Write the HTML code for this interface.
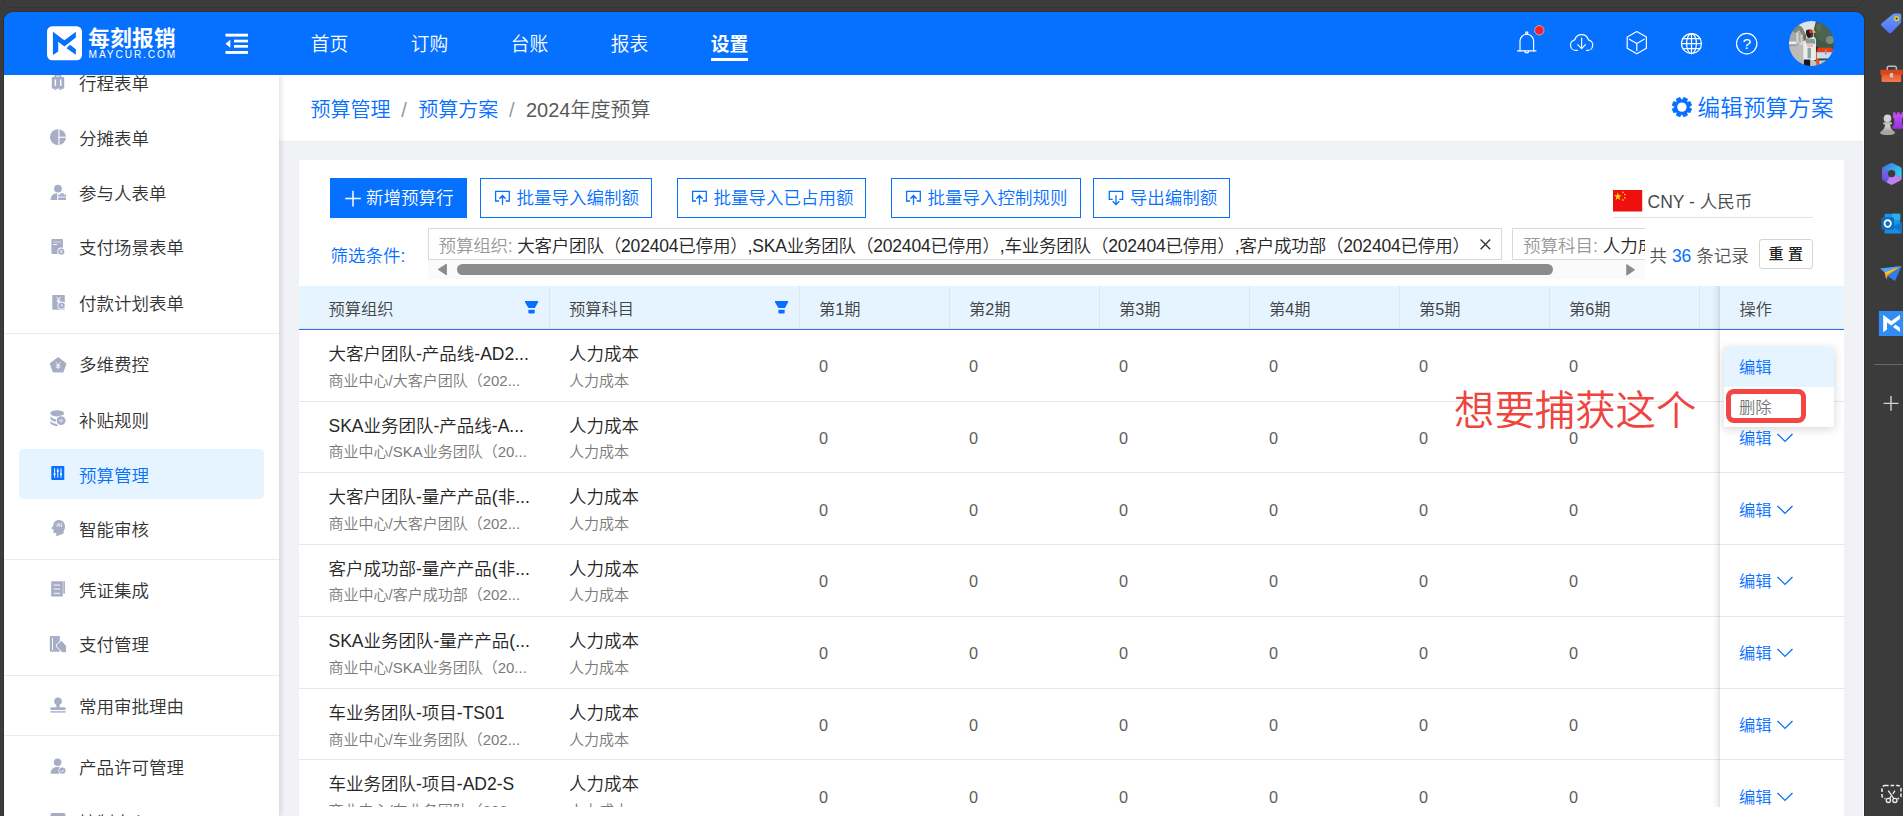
<!DOCTYPE html>
<html lang="zh-CN">
<head>
<meta charset="utf-8">
<title>每刻报销 - 预算管理</title>
<style>
*{box-sizing:border-box;margin:0;padding:0}
html,body{width:1903px;height:816px;overflow:hidden;background:#3b3b3b}
body{font-family:"Liberation Sans","Noto Sans CJK SC",sans-serif;color:#333;position:relative;font-weight:350}
.abs{position:absolute}
.t{position:absolute;white-space:nowrap}
svg{position:absolute;overflow:visible}
/* browser chrome bits */
#tabstrip{position:absolute;left:3px;top:-20px;width:1860px;height:28px;border:1px solid #343434;border-radius:9px;background:#3c3c3c}
#page{position:absolute;left:4px;top:12px;width:1860px;height:804px;background:#0670ff;border-radius:9px 9px 0 0;overflow:hidden;box-shadow:0 0 0 1px #313131}
#pg{position:absolute;left:-4px;top:-12px;width:1903px;height:816px}
#edge{position:absolute;left:1864px;top:0;width:39px;height:816px;overflow:hidden}
#eg{position:absolute;left:-1864px;top:0;width:1903px;height:816px}
/* header */
#hdr{position:absolute;left:0;top:0;width:1903px;height:75px;background:#0670ff;z-index:20}
.nav{position:absolute;top:29px;height:32px;line-height:32px;font-size:18.75px;color:#fff;white-space:nowrap}
/* sidebar */
#side{position:absolute;left:0;top:74px;width:279px;height:742px;background:#fff;z-index:10;box-shadow:1px 0 6px rgba(0,21,41,.16)}
.mi{position:absolute;left:79px;font-size:17.5px;line-height:26px;height:26px;color:#333;white-space:nowrap;z-index:11}
.mic{z-index:11}
.dv{position:absolute;left:4px;width:275px;height:1px;background:#ebebeb;z-index:11}
/* main */
#crumb{position:absolute;left:279px;top:74px;width:1584px;height:67.6px;background:#fff;border-bottom:1px solid #ebedf0}
.bc{position:absolute;top:95px;height:30px;line-height:30px;font-size:20px;white-space:nowrap}
#card{position:absolute;left:299px;top:160px;width:1545px;height:660px;background:#fff}
.btn{position:absolute;top:178px;height:40px;border:1px solid #0670ff;background:#fff}
.btn.pri{background:#0670ff}
.bt{position:absolute;top:185px;height:26px;line-height:26px;font-size:17.5px;color:#0670ff;white-space:nowrap}
.th{position:absolute;top:296px;height:26px;line-height:26px;font-size:16.25px;color:#444;white-space:nowrap}
.vs{position:absolute;top:286px;width:1px;height:42px;background:#e2e4e8}
.c1{position:absolute;font-size:17.5px;line-height:26px;height:26px;color:#262626;white-space:nowrap}
.c2{position:absolute;font-size:15px;line-height:22px;height:22px;color:#7a7a7a;white-space:nowrap}
.n{position:absolute;font-size:16.25px;line-height:24px;height:24px;color:#5c5c5c;white-space:nowrap}
.rl{position:absolute;left:299px;width:1545px;height:1px;background:#e8e8e8}
.ed{position:absolute;left:1739px;font-size:16.25px;line-height:24px;height:24px;color:#0670ff;white-space:nowrap;z-index:6}
#bg{position:absolute;left:0;top:70px;width:1903px;height:750px;background:#f0f2f5}
</style>
</head>
<body>
<div id="tabstrip"></div>
<div id="page"><div id="pg"><div id="bg"></div>
<div id="hdr">
<svg style="left:44px;top:23px" width="42" height="40" viewBox="0 0 857 816"><rect x="62" y="65" width="713" height="695" rx="105" fill="#fff"/><path d="M182 180 L415 350 L650 180 L650 295 L415 480 L290 385 L290 580 L182 655 Z" fill="#0670ff"/><path d="M530 445 L650 535 L650 650 L460 515 Z" fill="#0670ff"/></svg>
<div class="t" style="left:88.2px;top:23.8px;font-size:21.6px;line-height:30px;font-weight:700;color:#fff;letter-spacing:0.35px">每刻报销</div>
<div class="t" style="left:88.6px;top:48.9px;font-size:10.2px;line-height:12px;color:#fff;letter-spacing:1.85px;font-weight:400">MAYCUR.COM</div>
<svg style="left:0;top:0" width="1903" height="75" viewBox="0 0 1903 75">
<g fill="#fff"><rect x="225.5" y="33.7" width="22.5" height="2.9"/><rect x="234" y="39.7" width="14" height="2.7"/><rect x="234" y="45" width="14" height="2.7"/><rect x="225.5" y="51" width="22.5" height="2.9"/><path d="M225.5 43.7 L230.3 39.7 L230.3 47.8 Z"/></g>
<g fill="none" stroke="#fff" stroke-width="1.2" stroke-linecap="round" stroke-linejoin="round">
<path d="M1517.6 50.9 H1536"/><path d="M1520 50.9 V41 a6.8 6.8 0 0 1 13.6 0 V50.9"/><circle cx="1526.8" cy="33" r="1.1"/><path d="M1524.9 51.2 a1.9 1.6 0 0 0 3.8 0"/>
<path d="M1577.4 50.4 H1576 a5.3 5.3 0 0 1 -1.2 -10.5 a7 7 0 0 1 13.6 0 a5.3 5.3 0 0 1 -1.2 10.5 H1586.6"/><path d="M1581.6 38.2 V48.4 M1577.7 44.7 L1581.6 48.6 L1585.5 44.7"/>
<path d="M1636.8 31.5 L1646.4 37 L1646.4 48.2 L1636.8 53.7 L1627.2 48.2 L1627.2 37 Z"/><path d="M1636.8 43.5 L1629.4 39.2 M1636.8 43.5 L1644.2 39.2 M1636.8 43.5 V50.6"/>
<circle cx="1691.5" cy="43.6" r="10"/><ellipse cx="1691.5" cy="43.6" rx="4.9" ry="10"/><path d="M1691.5 33.6 V53.6 M1681.5 43.6 H1701.5 M1682.9 38.6 H1700.1 M1682.9 48.6 H1700.1"/>
<circle cx="1746.7" cy="43.6" r="10.2"/>
</g>
<circle cx="1539.3" cy="30.3" r="4.7" fill="#f5222d" stroke="#ffd9d9" stroke-width="0.6"/>
<text x="1746.7" y="49.2" text-anchor="middle" font-size="15.5" fill="#fff" font-family="Liberation Sans, sans-serif">?</text>
<defs><clipPath id="av"><circle cx="1811.45" cy="43.45" r="22.5"/></clipPath><filter id="bl" x="-5%" y="-5%" width="110%" height="110%"><feGaussianBlur stdDeviation="0.45"/></filter></defs>
<g clip-path="url(#av)"><g transform="translate(1788.95 20.95)" filter="url(#bl)">
<rect x="-2" y="-2" width="49" height="49" fill="#dde4e8"/>
<path d="M-2 12 L6 8 L12 12 L16 20 L16 26 L-2 27 Z" fill="#a7aaa2"/>
<path d="M3 9 L9 3.5 L13 6 L17.5 14 L15.5 17 L10 9.5 L6 12 Z" fill="#80857c"/>
<path d="M7 12 L9.5 11 L10 22 L7.5 22 Z M11.5 14 L13 14 L13.5 22 L12 22 Z" fill="#cdd3d4"/>
<path d="M-2 25 L16 23.5 L22 24 L29 47 L-2 47 Z" fill="#bdbcb8"/>
<rect x="-1" y="20.5" width="8.5" height="4" rx="1.2" fill="#ececec"/><rect x="10" y="21.5" width="4.5" height="2.4" rx="1" fill="#dcdcdc"/><rect x="-1" y="23.6" width="8.5" height="1" fill="#6b6b6b"/>
<path d="M27 0 L47 0 L47 30 L26 29 L24.5 20 L25 8 Z" fill="#42584a"/><ellipse cx="36" cy="12" rx="9" ry="9" fill="#4c6350"/><ellipse cx="41" cy="19" rx="4" ry="4" fill="#7d8c7c"/><ellipse cx="30" cy="6" rx="3" ry="4" fill="#566c57"/>
<path d="M21 38 L28 38 L30 47 L21 47 Z" fill="#c9c5be"/>
<path d="M25 25 L29 26 L29.5 41 L25.5 40 Z" fill="#2b2f33"/><path d="M26.5 31 L29 30 L31 45 L27.5 45 Z" fill="#e5551f"/><path d="M31 38 L39 37.5 L37 43 L32 44 Z" fill="#a9c6c8"/><path d="M29 37 L42 36.6 L41 39 L30 39.6 Z" fill="#3a3f42"/>
<rect x="28.4" y="26.8" width="15.2" height="5.4" rx="1.4" fill="#ee3d16"/><rect x="28" y="31.4" width="15.2" height="6.2" rx="0.8" fill="#c6deef"/><rect x="36" y="28.8" width="1.6" height="4.8" fill="#9c9b8d"/>
<path d="M14.2 18 Q14.5 15.5 18 15.5 L25 16 Q27.6 17 27 22 L27 39 L14.5 39.5 Z" fill="#e9eded"/>
<path d="M14.2 15 L17 14 L17.6 19 L14.6 20 Z" fill="#8c5c3c"/>
<path d="M16.6 17 L25.5 18 Q27 20 26 23 L18 23.5 Q16 21 16.6 17 Z" fill="#81a098"/><path d="M17.6 22.4 L24.6 22 L24 26 L18.6 26.6 Z" fill="#e9bcc0"/><rect x="18.6" y="27" width="3.4" height="10.4" fill="#88a5a0"/>
<path d="M17 10.5 Q17 8.6 19.5 8.6 L23 8.8 Q24.6 9.5 24.4 12 L23.6 16.4 L19 17 Q16.8 15 17 10.5 Z" fill="#1f1b1f"/><path d="M20 9.6 L24 9 L25 12 L20.6 12.4 Z" fill="#ee2a4c"/><path d="M23.4 9 L25.6 9.6 L26.8 11.6 L24.4 12.2 Z" fill="#f5c62c"/><path d="M21.4 12.6 L24 12.4 L23.6 15.6 L21.8 15.8 Z" fill="#5a3a30"/>
<rect x="15" y="38.6" width="6.2" height="8" fill="#15151c"/>
</g></g>
</svg>
<div class="nav" style="left:310.7px">首页</div>
<div class="nav" style="left:410.7px">订购</div>
<div class="nav" style="left:510.7px">台账</div>
<div class="nav" style="left:610.7px">报表</div>
<div class="nav" style="left:710.7px;font-weight:700">设置</div>
<div class="abs" style="left:711px;top:58px;width:36.5px;height:2.6px;background:#fff"></div>
</div>
<div id="side"></div>
<div class="abs" style="left:19px;top:449px;width:245px;height:49.5px;background:#e6f4ff;border-radius:5px;z-index:11"></div>
<div class="mi" style="top:70.8px">行程表单</div>
<div class="mi" style="top:125.8px">分摊表单</div>
<div class="mi" style="top:180.8px">参与人表单</div>
<div class="mi" style="top:234.8px">支付场景表单</div>
<div class="mi" style="top:290.8px">付款计划表单</div>
<div class="mi" style="top:351.8px">多维费控</div>
<div class="mi" style="top:407.8px">补贴规则</div>
<div class="mi" style="top:462.8px;color:#0670ff">预算管理</div>
<div class="mi" style="top:516.8px">智能审核</div>
<div class="mi" style="top:577.8px">凭证集成</div>
<div class="mi" style="top:631.8px">支付管理</div>
<div class="mi" style="top:693.8px">常用审批理由</div>
<div class="mi" style="top:754.8px">产品许可管理</div>
<div class="mi" style="top:809.8px">控制中心</div>
<div class="dv" style="top:333px"></div>
<div class="dv" style="top:559px"></div>
<div class="dv" style="top:675px"></div>
<div class="dv" style="top:735px"></div>
<svg class="mic" style="left:0;top:74px" width="279" height="742" viewBox="0 74 279 742">
<rect x="54.4" y="74.9" width="6.8" height="2.6" rx="0.5" fill="#a6adc5"/><rect x="56" y="75.7" width="3.6" height="1.2" fill="#dfe3ee"/><rect x="51.8" y="76.9" width="12.4" height="11.8" rx="0.9" fill="#a6adc5"/><rect x="54.7" y="79.5" width="1.4" height="6.5" fill="#fff"/><rect x="60" y="79.5" width="1.4" height="6.5" fill="#fff"/><rect x="54.4" y="88.6" width="1.9" height="1.4" fill="#a6adc5"/><rect x="59.6" y="88.6" width="1.9" height="1.4" fill="#a6adc5"/>
<circle cx="58" cy="137.2" r="8" fill="#a6adc5"/><rect x="58.4" y="129" width="1.1" height="16.5" fill="#fff"/><rect x="58.4" y="136.7" width="8" height="1.1" fill="#fff"/>
<circle cx="58" cy="188.6" r="3.9" fill="#a6adc5"/><path d="M50.6 200 C50.6 195.6 53.6 193.3 57.2 193.3 L57.2 200 Z" fill="#a6adc5"/><rect x="58.2" y="194.6" width="7.8" height="5.4" fill="#a6adc5"/><rect x="60.4" y="193.2" width="3.4" height="1.6" fill="#a6adc5"/><rect x="58.2" y="196.6" width="7.8" height="0.9" fill="#fff"/>
<rect x="51.4" y="239" width="11.5" height="14.9" rx="0.8" fill="#a6adc5"/><rect x="53.2" y="241.3" width="7.8" height="1.5" fill="#c6ccdc"/><rect x="53.2" y="244" width="4" height="1" fill="#f4f5f9"/><circle cx="61.3" cy="251.5" r="4" fill="#fff"/><circle cx="61.3" cy="251.5" r="3.1" fill="#a6adc5"/><path d="M60.1 249.9 L61.3 251.4 L62.5 249.9 M61.3 251.4 V253.4 M60.2 251.9 H62.4" stroke="#fff" stroke-width="0.65" fill="none"/>
<rect x="52.3" y="295" width="12.5" height="14.7" rx="0.8" fill="#a6adc5"/><path d="M56.5 296.9 L58.5 299.4 L60.5 296.9 M58.5 299.4 V302.8 M56.7 300 H60.3 M56.7 301.4 H60.3" stroke="#fff" stroke-width="0.9" fill="none"/><circle cx="61.5" cy="305.6" r="4.1" fill="#fff"/><circle cx="61.5" cy="305.6" r="3.2" fill="#a6adc5"/><path d="M61.3 303.8 V305.9 H63" stroke="#fff" stroke-width="0.8" fill="none"/>
<path d="M58.1 357.6 L66 363.5 L63 372 L53.2 372 L50.2 363.5 Z" fill="#a6adc5" stroke="#a6adc5" stroke-width="1" stroke-linejoin="round"/><path d="M56 362.3 L58.1 365 L60.2 362.3 M58.1 365 V369 M55.8 365.6 H60.4 M55.8 367.3 H60.4" stroke="#fff" stroke-width="0.85" fill="none"/>
<ellipse cx="57.2" cy="413.3" rx="6.8" ry="3.1" fill="#a6adc5"/><path d="M50.4 416.6 Q53 419.4 58 419.6 L58 422 Q52.6 421.6 50.4 418.9 Z" fill="#a6adc5"/><path d="M50.4 421 Q52.6 423.8 57 424.2 L58.4 426 Q52.4 426 50.4 423.2 Z" fill="#a6adc5"/><circle cx="61.1" cy="420.7" r="5.3" fill="#fff"/><circle cx="61.1" cy="420.7" r="4.4" fill="#a6adc5"/><path d="M58.9 420.7 H63.3 M61.1 418.5 V422.9" stroke="#e9ebf2" stroke-width="0.8"/>
<rect x="51.3" y="466" width="13" height="14" rx="0.8" fill="#0670ff"/><path d="M54.6 468.3 V477.7 M57.8 468.3 V477.7 M61 468.3 V477.7" stroke="#fff" stroke-width="1"/><path d="M53.6 474.3 H55.6 M56.8 471 H58.8 M60 474.3 H62" stroke="#fff" stroke-width="1.6"/>
<path d="M58.8 519.9 C62.6 519.9 65 522.8 65 526.4 C65 529 63.9 530.6 63.5 532 L63.5 533.6 L57.2 536 L56.3 536 L56.3 532.9 L53.5 532.9 L53.5 529.4 L51.3 528.5 L53.3 525.4 C53.5 522.2 55.8 519.9 58.8 519.9 Z" fill="#a6adc5"/><text x="59.2" y="527.3" font-size="5.8" font-weight="700" fill="#f3f4f8" text-anchor="middle" font-family="Liberation Sans, sans-serif">AI</text>
<rect x="51.2" y="581.2" width="11.6" height="15.4" rx="0.6" fill="#a6adc5"/><rect x="63.3" y="581.2" width="1.6" height="12.4" fill="#a6adc5"/><path d="M53.6 585.1 H60.2 M53.6 589 H60.2 M53.6 593.3 H60.2" stroke="#fff" stroke-width="0.95"/>
<rect x="49.8" y="636.1" width="10" height="15.6" fill="#a6adc5"/><rect x="52" y="638" width="0.9" height="12" fill="#fff"/><path d="M61.6 640.4 L66.6 645.9 L66.6 652.7 L62.3 652.7 L56.4 646.6 Q56 644.6 58.2 643 Z" fill="#a6adc5" stroke="#fff" stroke-width="1" stroke-linejoin="round"/>
<circle cx="58" cy="701.2" r="3.8" fill="#a6adc5"/><rect x="56.3" y="703" width="3.4" height="5" fill="#a6adc5"/><path d="M50.4 710 V708.6 Q50.4 707.3 52 707.3 H64 Q65.6 707.3 65.6 708.6 V710 Z" fill="#a6adc5"/><rect x="50.4" y="711.2" width="15.2" height="1.4" fill="#a6adc5"/>
<circle cx="57.6" cy="762.3" r="3.8" fill="#a6adc5"/><path d="M50.5 773.7 C50.5 769.4 53.4 766.9 57.4 766.9 C59.4 766.9 60.8 767.5 61.8 768.5 L61.8 773.7 Z" fill="#a6adc5"/><circle cx="62.4" cy="770.6" r="3.9" fill="#fff"/><circle cx="62.4" cy="770.6" r="3.2" fill="#a6adc5"/><path d="M60.9 770.7 L62 771.8 L64 769.6" stroke="#fff" stroke-width="0.8" fill="none"/>
<rect x="50.5" y="813" width="15" height="12" rx="2" fill="#a6adc5"/>
</svg>
<div id="crumb"></div>
<div class="abs" style="left:1863px;top:75px;width:1.2px;height:745px;background:#fdfdfd"></div>
<div class="bc" style="left:310.5px;color:#0670ff">预算管理</div>
<div class="bc" style="left:401.3px;color:#999">/</div>
<div class="bc" style="left:418.3px;color:#0670ff">预算方案</div>
<div class="bc" style="left:509px;color:#999">/</div>
<div class="bc" style="left:526px;color:#595959">2024年度预算</div>
<svg style="left:0;top:0;z-index:2" width="1903" height="160" viewBox="0 0 1903 160"><path d="M1682.52 99.63 L1683.80 97.38 L1687.43 98.89 L1686.75 101.38 L1687.62 102.25 L1690.11 101.57 L1691.62 105.20 L1689.37 106.48 L1689.37 107.72 L1691.62 109.00 L1690.11 112.63 L1687.62 111.95 L1686.75 112.82 L1687.43 115.31 L1683.80 116.82 L1682.52 114.57 L1681.28 114.57 L1680.00 116.82 L1676.37 115.31 L1677.05 112.82 L1676.18 111.95 L1673.69 112.63 L1672.18 109.00 L1674.43 107.72 L1674.43 106.48 L1672.18 105.20 L1673.69 101.57 L1676.18 102.25 L1677.05 101.38 L1676.37 98.89 L1680.00 97.38 L1681.28 99.63 Z" fill="#0670ff" stroke="#0670ff" stroke-width="0.8" stroke-linejoin="round"/><circle cx="1681.9" cy="107.1" r="4.7" fill="#fff"/></svg>
<div class="t" style="left:1697.5px;top:93px;height:32px;line-height:32px;font-size:22.5px;letter-spacing:0.2px;color:#0670ff">编辑预算方案</div>
<div id="card"></div>
<div class="btn pri" style="left:330px;width:137px;box-shadow:0 2px 0 rgba(0,0,0,.03)"></div>
<div class="bt" style="left:366px;color:#fff">新增预算行</div>
<svg style="left:0;top:160px;z-index:3" width="1903" height="130" viewBox="0 160 1903 130">
<path d="M345.2 198.6 H360.8 M353 190.8 V206.4" stroke="#fff" stroke-width="1.5" fill="none"/>
<path d="M499.1 201 H495.6 V191.4 H509.3 V201 H505.70000000000005 M502.5 204.7 V195.6 M499.3 198.8 L502.5 195.5 L505.70000000000005 198.8" stroke="#0670ff" stroke-width="1.3" fill="none" stroke-linejoin="miter"/>
<path d="M696.1 201 H692.6 V191.4 H706.3000000000001 V201 H702.7 M699.5 204.7 V195.6 M696.3000000000001 198.8 L699.5 195.5 L702.7 198.8" stroke="#0670ff" stroke-width="1.3" fill="none" stroke-linejoin="miter"/>
<path d="M910.1 201 H906.6 V191.4 H920.3000000000001 V201 H916.7 M913.5 204.7 V195.6 M910.3000000000001 198.8 L913.5 195.5 L916.7 198.8" stroke="#0670ff" stroke-width="1.3" fill="none" stroke-linejoin="miter"/>
<path d="M1112.7 199.4 H1109.3 V191.4 H1122.6 V199.4 H1119.3 M1116.0 195.2 V204.3 M1112.7 201.2 L1116.0 204.6 L1119.3 201.2" stroke="#0670ff" stroke-width="1.3" fill="none"/>
</svg>
<div class="btn" style="left:480px;width:172px"></div>
<div class="bt" style="left:516.5px">批量导入编制额</div>
<div class="btn" style="left:677px;width:189px"></div>
<div class="bt" style="left:713.5px">批量导入已占用额</div>
<div class="btn" style="left:891px;width:190px"></div>
<div class="bt" style="left:927.6px">批量导入控制规则</div>
<div class="btn" style="left:1093px;width:137px"></div>
<div class="bt" style="left:1129.8px">导出编制额</div>
<svg style="left:1613.4px;top:189.7px" width="29.2" height="21.5" viewBox="0 0 30 20" preserveAspectRatio="none"><rect width="30" height="20" fill="#ee0f0f"/><g fill="#ffde00"><path d="M5 2 L5.9 4.8 L8.8 4.8 L6.5 6.5 L7.4 9.3 L5 7.6 L2.6 9.3 L3.5 6.5 L1.2 4.8 L4.1 4.8 Z"/><circle cx="10.2" cy="2.2" r="0.8"/><circle cx="12.2" cy="4.2" r="0.8"/><circle cx="12.2" cy="7.2" r="0.8"/><circle cx="10.2" cy="9.2" r="0.8"/></g></svg>
<div class="t" style="left:1647.5px;top:188.5px;height:26px;line-height:26px;font-size:17.5px;color:#4a4a4a">CNY - 人民币</div>
<div class="abs" style="left:1613px;top:217px;width:200px;height:1px;background:#e3e3e3"></div>
<div class="t" style="left:330.5px;top:242.6px;height:26px;line-height:26px;font-size:17.5px;color:#0670ff">筛选条件:</div>
<div class="abs" style="left:428px;top:226px;width:1217px;height:53px;overflow:hidden">
<div class="abs" style="left:0;top:2.3px;width:1074px;height:31.7px;border:1px solid #d9d9d9;background:#fff"></div>
<div class="t" style="left:10.6px;top:7px;height:26px;line-height:26px;font-size:17.5px;color:#262626;letter-spacing:-0.19px"><span style="color:#999">预算组织:</span> 大客户团队（202404已停用）,SKA业务团队（202404已停用）,车业务团队（202404已停用）,客户成功部（202404已停用）</div>
<svg style="left:1051.6px;top:13.3px" width="11" height="11" viewBox="0 0 11 11"><path d="M0.6 0.6 L10.2 10.2 M10.2 0.6 L0.6 10.2" stroke="#333" stroke-width="1.35"/></svg>
<div class="abs" style="left:1084px;top:2.3px;width:300px;height:31.7px;border:1px solid #d9d9d9;background:#fff"></div>
<div class="t" style="left:1095px;top:7px;height:26px;line-height:26px;font-size:17.5px;color:#262626"><span style="color:#999">预算科目:</span> 人力成本</div>
<div class="abs" style="left:0;top:34px;width:1217px;height:19px;background:#fafafa"></div>
<div class="abs" style="left:29px;top:37.8px;width:1095.5px;height:11px;border-radius:5.5px;background:#8b8b8b"></div>
<svg style="left:0;top:34px" width="1217" height="19" viewBox="0 0 1217 19"><path d="M10.3 9.4 L18.4 4.2 L18.4 14.8 Z" fill="#8b8b8b" stroke="#8b8b8b" stroke-width="1" stroke-linejoin="round"/><path d="M1206.5 9.8 L1198.8 4.6 L1198.8 15.2 Z" fill="#8b8b8b" stroke="#8b8b8b" stroke-width="1" stroke-linejoin="round"/></svg>
</div>
<div class="t" style="left:1649.5px;top:242.5px;height:26px;line-height:26px;font-size:17.5px;color:#555">共 <span style="color:#0670ff">36</span> 条记录</div>
<div class="abs" style="left:1759px;top:239px;width:54px;height:29.5px;border:1px solid #d4d4d4;border-radius:3px;background:#fff"></div>
<div class="t" style="left:1768.5px;top:242px;height:24px;line-height:24px;font-size:15px;color:#222;letter-spacing:4.5px;font-weight:500">重置</div>
<div class="abs" style="left:299px;top:286px;width:1545px;height:42.7px;background:#e6f4ff;border-bottom:0.9px solid #dfe8ee"></div>
<div class="abs" style="left:299px;top:328.7px;width:1545px;height:1.35px;background:#2a72e6"></div>
<div class="vs" style="left:549px"></div>
<div class="vs" style="left:799px"></div>
<div class="vs" style="left:949px"></div>
<div class="vs" style="left:1099px"></div>
<div class="vs" style="left:1249px"></div>
<div class="vs" style="left:1399px"></div>
<div class="vs" style="left:1549px"></div>
<div class="vs" style="left:1699px"></div>
<div class="th" style="left:328.5px">预算组织</div>
<div class="th" style="left:569px">预算科目</div>
<div class="th" style="left:819px">第1期</div>
<div class="th" style="left:969px">第2期</div>
<div class="th" style="left:1119px">第3期</div>
<div class="th" style="left:1269px">第4期</div>
<div class="th" style="left:1419px">第5期</div>
<div class="th" style="left:1569px">第6期</div>
<svg style="left:0;top:286px" width="1903" height="44" viewBox="0 286 1903 44"><path d="M525 301 H538.1 V302.2 L534.9 307.9 H528.4 L525 302.2 Z M528.4 309.7 H534.7 V312.6 Q534.7 313.6 533.7 313.6 H529.4 Q528.4 313.6 528.4 312.6 Z" fill="#0670ff"/><path d="M775 301 H788.1 V302.2 L784.9 307.9 H778.4 L775 302.2 Z M778.4 309.7 H784.7 V312.6 Q784.7 313.6 783.7 313.6 H779.4 Q778.4 313.6 778.4 312.6 Z" fill="#0670ff"/></svg>
<div class="abs" style="left:299px;top:330px;width:1545px;height:477px;overflow:hidden"><div class="abs" style="left:-299px;top:-330px;width:1903px;height:900px">
<div class="c1" style="left:328.5px;top:340.60px">大客户团队-产品线-AD2...</div>
<div class="c2" style="left:328.5px;top:369.50px">商业中心/大客户团队（202...</div>
<div class="c1" style="left:569px;top:340.60px">人力成本</div>
<div class="c2" style="left:569px;top:369.50px">人力成本</div>
<div class="n" style="left:819px;top:354.00px">0</div>
<div class="n" style="left:969px;top:354.00px">0</div>
<div class="n" style="left:1119px;top:354.00px">0</div>
<div class="n" style="left:1269px;top:354.00px">0</div>
<div class="n" style="left:1419px;top:354.00px">0</div>
<div class="n" style="left:1569px;top:354.00px">0</div>
<div class="rl" style="top:401px"></div>
<div class="c1" style="left:328.5px;top:412.60px">SKA业务团队-产品线-A...</div>
<div class="c2" style="left:328.5px;top:440.50px">商业中心/SKA业务团队（20...</div>
<div class="c1" style="left:569px;top:412.60px">人力成本</div>
<div class="c2" style="left:569px;top:440.50px">人力成本</div>
<div class="n" style="left:819px;top:426.00px">0</div>
<div class="n" style="left:969px;top:426.00px">0</div>
<div class="n" style="left:1119px;top:426.00px">0</div>
<div class="n" style="left:1269px;top:426.00px">0</div>
<div class="n" style="left:1419px;top:426.00px">0</div>
<div class="n" style="left:1569px;top:426.00px">0</div>
<div class="rl" style="top:472px"></div>
<div class="c1" style="left:328.5px;top:483.60px">大客户团队-量产产品(非...</div>
<div class="c2" style="left:328.5px;top:512.50px">商业中心/大客户团队（202...</div>
<div class="c1" style="left:569px;top:483.60px">人力成本</div>
<div class="c2" style="left:569px;top:512.50px">人力成本</div>
<div class="n" style="left:819px;top:498.00px">0</div>
<div class="n" style="left:969px;top:498.00px">0</div>
<div class="n" style="left:1119px;top:498.00px">0</div>
<div class="n" style="left:1269px;top:498.00px">0</div>
<div class="n" style="left:1419px;top:498.00px">0</div>
<div class="n" style="left:1569px;top:498.00px">0</div>
<div class="rl" style="top:544px"></div>
<div class="c1" style="left:328.5px;top:555.60px">客户成功部-量产产品(非...</div>
<div class="c2" style="left:328.5px;top:583.50px">商业中心/客户成功部（202...</div>
<div class="c1" style="left:569px;top:555.60px">人力成本</div>
<div class="c2" style="left:569px;top:583.50px">人力成本</div>
<div class="n" style="left:819px;top:569.00px">0</div>
<div class="n" style="left:969px;top:569.00px">0</div>
<div class="n" style="left:1119px;top:569.00px">0</div>
<div class="n" style="left:1269px;top:569.00px">0</div>
<div class="n" style="left:1419px;top:569.00px">0</div>
<div class="n" style="left:1569px;top:569.00px">0</div>
<div class="rl" style="top:616px"></div>
<div class="c1" style="left:328.5px;top:627.60px">SKA业务团队-量产产品(...</div>
<div class="c2" style="left:328.5px;top:656.50px">商业中心/SKA业务团队（20...</div>
<div class="c1" style="left:569px;top:627.60px">人力成本</div>
<div class="c2" style="left:569px;top:656.50px">人力成本</div>
<div class="n" style="left:819px;top:641.00px">0</div>
<div class="n" style="left:969px;top:641.00px">0</div>
<div class="n" style="left:1119px;top:641.00px">0</div>
<div class="n" style="left:1269px;top:641.00px">0</div>
<div class="n" style="left:1419px;top:641.00px">0</div>
<div class="n" style="left:1569px;top:641.00px">0</div>
<div class="rl" style="top:688px"></div>
<div class="c1" style="left:328.5px;top:699.60px">车业务团队-项目-TS01</div>
<div class="c2" style="left:328.5px;top:728.50px">商业中心/车业务团队（202...</div>
<div class="c1" style="left:569px;top:699.60px">人力成本</div>
<div class="c2" style="left:569px;top:728.50px">人力成本</div>
<div class="n" style="left:819px;top:713.00px">0</div>
<div class="n" style="left:969px;top:713.00px">0</div>
<div class="n" style="left:1119px;top:713.00px">0</div>
<div class="n" style="left:1269px;top:713.00px">0</div>
<div class="n" style="left:1419px;top:713.00px">0</div>
<div class="n" style="left:1569px;top:713.00px">0</div>
<div class="rl" style="top:759px"></div>
<div class="c1" style="left:328.5px;top:770.60px">车业务团队-项目-AD2-S</div>
<div class="c2" style="left:328.5px;top:799.50px">商业中心/车业务团队（202...</div>
<div class="c1" style="left:569px;top:770.60px">人力成本</div>
<div class="c2" style="left:569px;top:799.50px">人力成本</div>
<div class="n" style="left:819px;top:785.00px">0</div>
<div class="n" style="left:969px;top:785.00px">0</div>
<div class="n" style="left:1119px;top:785.00px">0</div>
<div class="n" style="left:1269px;top:785.00px">0</div>
<div class="n" style="left:1419px;top:785.00px">0</div>
<div class="n" style="left:1569px;top:785.00px">0</div>
<div class="rl" style="top:831px"></div>
</div></div>
<div class="abs" style="left:1712px;top:286px;width:8px;height:521px;background:linear-gradient(to left,rgba(0,0,0,.11),rgba(0,0,0,.035) 45%,rgba(0,0,0,0));z-index:4"></div>
<div class="abs" style="left:1720px;top:286px;width:124px;height:521px;background:#fff;z-index:4;overflow:hidden">
<div class="abs" style="left:0;top:0;width:124px;height:42.7px;background:#e6f4ff;border-bottom:0.9px solid #dfe8ee"></div><div class="abs" style="left:0;top:42.7px;width:124px;height:1.35px;background:#2a72e6"></div>
<div class="abs" style="left:0;top:115px;width:124px;height:1px;background:#e8e8e8"></div>
<div class="abs" style="left:0;top:186px;width:124px;height:1px;background:#e8e8e8"></div>
<div class="abs" style="left:0;top:258px;width:124px;height:1px;background:#e8e8e8"></div>
<div class="abs" style="left:0;top:330px;width:124px;height:1px;background:#e8e8e8"></div>
<div class="abs" style="left:0;top:402px;width:124px;height:1px;background:#e8e8e8"></div>
<div class="abs" style="left:0;top:473px;width:124px;height:1px;background:#e8e8e8"></div>
<div class="abs" style="left:0;top:545px;width:124px;height:1px;background:#e8e8e8"></div>
</div>
<div class="th" style="left:1739.5px;z-index:6">操作</div>
<div class="abs" style="left:1720px;top:330px;width:124px;height:477px;overflow:hidden;z-index:6"><div class="abs" style="left:-1720px;top:-330px;width:1903px;height:900px">
<div class="ed" style="top:426.30px">编辑</div>
<svg style="left:1776.6px;top:432.95px;z-index:6" width="17" height="10" viewBox="0 0 17 10"><path d="M0.5 0.9 L8 8.4 L15.5 0.9" stroke="#0670ff" stroke-width="1.35" fill="none"/></svg>
<div class="ed" style="top:498.30px">编辑</div>
<svg style="left:1776.6px;top:504.95px;z-index:6" width="17" height="10" viewBox="0 0 17 10"><path d="M0.5 0.9 L8 8.4 L15.5 0.9" stroke="#0670ff" stroke-width="1.35" fill="none"/></svg>
<div class="ed" style="top:569.30px">编辑</div>
<svg style="left:1776.6px;top:575.95px;z-index:6" width="17" height="10" viewBox="0 0 17 10"><path d="M0.5 0.9 L8 8.4 L15.5 0.9" stroke="#0670ff" stroke-width="1.35" fill="none"/></svg>
<div class="ed" style="top:641.30px">编辑</div>
<svg style="left:1776.6px;top:647.95px;z-index:6" width="17" height="10" viewBox="0 0 17 10"><path d="M0.5 0.9 L8 8.4 L15.5 0.9" stroke="#0670ff" stroke-width="1.35" fill="none"/></svg>
<div class="ed" style="top:713.30px">编辑</div>
<svg style="left:1776.6px;top:719.95px;z-index:6" width="17" height="10" viewBox="0 0 17 10"><path d="M0.5 0.9 L8 8.4 L15.5 0.9" stroke="#0670ff" stroke-width="1.35" fill="none"/></svg>
<div class="ed" style="top:785.30px">编辑</div>
<svg style="left:1776.6px;top:791.95px;z-index:6" width="17" height="10" viewBox="0 0 17 10"><path d="M0.5 0.9 L8 8.4 L15.5 0.9" stroke="#0670ff" stroke-width="1.35" fill="none"/></svg>
</div></div>
<div class="abs" style="left:1724px;top:347px;width:110px;height:80px;background:#fff;box-shadow:0 2px 9px rgba(0,0,0,.17);z-index:8"></div>
<div class="abs" style="left:1724px;top:347px;width:110px;height:40px;background:#e6f4ff;z-index:8"></div>
<div class="ed" style="top:355px;z-index:9">编辑</div>
<div class="ed" style="top:395.3px;z-index:9;color:#757575;font-size:16.25px">删除</div>
<div class="abs" style="left:1726.1px;top:388.6px;width:80px;height:34.3px;border:5px solid #f24645;border-radius:8px;z-index:9"></div>
<div class="t" style="left:1454px;top:386.2px;height:50px;line-height:50px;font-size:40.4px;color:#f0443e;z-index:9">想要捕获这个</div>
</div></div>
<div id="edge"><div id="eg">
<svg style="left:0;top:0" width="1903" height="816" viewBox="0 0 1903 816">
<defs><linearGradient id="g1" x1="0" y1="0" x2="0" y2="1"><stop offset="0" stop-color="#6a9bf4"/><stop offset="1" stop-color="#4f6ff5"/></linearGradient><linearGradient id="g2" x1="0" y1="0" x2="1" y2="1"><stop offset="0" stop-color="#5aa0f0"/><stop offset="1" stop-color="#9b5de5"/></linearGradient><linearGradient id="g3" x1="0" y1="0" x2="0" y2="1"><stop offset="0" stop-color="#e9572c"/><stop offset="1" stop-color="#f07a52"/></linearGradient></defs>
<path d="M1881.4 23.6 L1893 14.1 Q1893.8 13.5 1894.8 13.5 L1899.4 13.4 Q1901.3 13.4 1901.3 15.3 L1901.2 21.6 Q1901.2 22.6 1900.5 23.3 L1891.2 33 Q1890 34 1888.7 32.8 L1881.4 25.8 Q1880.4 24.7 1881.4 23.6 Z" fill="url(#g1)"/><circle cx="1896.6" cy="18.6" r="2.6" fill="#f2d21c"/><circle cx="1896.6" cy="18.6" r="1.1" fill="#4a3c12"/>
<path d="M1887.2 70 V68 Q1887.2 66.2 1889 66.2 H1894.6 Q1896.4 66.2 1896.4 68 V70" stroke="#bdbdbd" stroke-width="1.5" fill="none"/><rect x="1880.3" y="69.7" width="22.5" height="5.2" rx="1.2" fill="#d7451c"/><rect x="1881.5" y="74.4" width="19.7" height="7.5" rx="1.2" fill="url(#g3)"/><rect x="1889.8" y="73" width="3.4" height="4.6" rx="0.8" fill="#c3c7cc"/>
<defs><linearGradient id="g4" x1="0" y1="0" x2="0" y2="1"><stop offset="0" stop-color="#c455f7"/><stop offset="1" stop-color="#9a2fe2"/></linearGradient><linearGradient id="g5" x1="0" y1="0" x2="0" y2="1"><stop offset="0" stop-color="#d6d6d6"/><stop offset="1" stop-color="#a2a2a2"/></linearGradient></defs>
<path d="M1893.4 112.3 h2 v2 h1.8 v-2 h2.4 v2 h1.8 v-2 h2 v5 l-1.5 1.5 v6 l1.7 1.5 v2.5 h-11 v-2.5 l1.7 -1.5 v-6 l-1.5 -1.5 Z" fill="url(#g4)"/>
<circle cx="1887.5" cy="118.4" r="3.8" fill="#d2d2d2"/><rect x="1883.2" y="122.2" width="8.8" height="2.2" rx="1" fill="#c4c4c4"/><path d="M1885.2 124.2 h4.8 q0.3 4.4 3.6 6.8 l0 1.4 h-12 l0 -1.4 q3.3 -2.4 3.6 -6.8 Z" fill="url(#g5)"/><ellipse cx="1887.6" cy="132.7" rx="7.5" ry="2.4" fill="#a6a6a6"/>
<defs><linearGradient id="g6" x1="0" y1="0" x2="1" y2="0.6"><stop offset="0" stop-color="#3b6fe0"/><stop offset="1" stop-color="#36c8f2"/></linearGradient><linearGradient id="g7" x1="0" y1="0" x2="0" y2="1"><stop offset="0" stop-color="#8a62e6"/><stop offset="1" stop-color="#4b55d6"/></linearGradient></defs>
<path d="M1882 168.8 Q1882 167.6 1883 167 L1890.4 163.2 Q1891.6 162.6 1892.8 163.2 L1900.4 167 Q1901.6 167.6 1901.6 168.8 V177.4 L1891.6 173.7 Z" fill="url(#g6)"/>
<path d="M1882 168.8 L1891.6 173.7 L1888.6 183.6 L1883.2 180.6 Q1882 179.9 1882 178.6 Z" fill="url(#g7)"/>
<path d="M1891.6 173.7 L1901.6 177.2 V178.6 Q1901.6 179.9 1900.4 180.6 L1892.8 184.4 Q1891.6 185 1890.4 184.4 L1886.4 182.3 Z" fill="#bd80f0"/>
<circle cx="1891.6" cy="173.6" r="3.7" fill="#3b3b3b"/>
<rect x="1884.5" y="213.7" width="15.7" height="12" rx="1" fill="#1b96e4"/><rect x="1892.4" y="213.7" width="7.8" height="6" fill="#2fb0ee"/><path d="M1884.5 224 L1901.6 222.6 V232.2 Q1901.6 233.4 1900.4 233.4 H1885.7 Q1884.5 233.4 1884.5 232.2 Z" fill="#1a8ee0"/><path d="M1892.5 226.6 L1901.6 222.6 V232.8 Z" fill="#1275cf"/><rect x="1881.4" y="217.2" width="12.6" height="12.6" rx="1.6" fill="#0f6cbd"/><ellipse cx="1887.7" cy="223.5" rx="3.2" ry="3.4" fill="none" stroke="#fff" stroke-width="1.7"/>
<path d="M1880 268.4 L1901.6 266 L1885 272.8 Z" fill="#4ea4ff"/><path d="M1884.6 272.6 L1901.3 266.2 L1887.8 275.8 L1886.1 279.8 Z" fill="#f6a51f"/><path d="M1884.6 272.6 L1901.3 266.2 L1886.6 274 Z" fill="#fbc530"/><path d="M1901.6 266 L1895 281 L1887.6 276 Z" fill="#2f7ef2"/><path d="M1887.6 276 L1889.4 278.4 L1886.2 279.8 Z" fill="#1d4fb8"/>
<rect x="1878.9" y="311" width="25" height="25" fill="#2f8df5"/><path d="M1883.2 314.8 L1891.2 320.9 L1899.9 314.8 L1899.9 319 L1891.2 325.6 L1887 322.5 L1887 329.4 L1883.2 332.2 Z" fill="#fff"/><path d="M1895.4 324.6 L1899.9 327.8 L1899.9 332 L1893 327 Z" fill="#fff"/>
<rect x="1874" y="364" width="30" height="1" fill="#686868"/>
<path d="M1883.6 403.4 H1898.4 M1891 396 V410.8" stroke="#d2d2d2" stroke-width="1.4"/>
<rect x="1882" y="785.6" width="19" height="13" rx="3" fill="none" stroke="#f2f2f2" stroke-width="1.5" stroke-dasharray="3.6 2"/><rect x="1885.5" y="796" width="12" height="6" fill="#3b3b3b"/><path d="M1888.3 790.6 L1894 799 M1895 790.6 L1892.8 794" stroke="#f2f2f2" stroke-width="1.3"/><path d="M1891.2 796 L1889.6 798.6" stroke="#f2f2f2" stroke-width="1.3"/><circle cx="1888.4" cy="800.4" r="2.1" fill="#3b3b3b" stroke="#f2f2f2" stroke-width="1.3"/><circle cx="1894.9" cy="800.4" r="2.1" fill="#3b3b3b" stroke="#f2f2f2" stroke-width="1.3"/>
</svg>
</div></div>
</body>
</html>
